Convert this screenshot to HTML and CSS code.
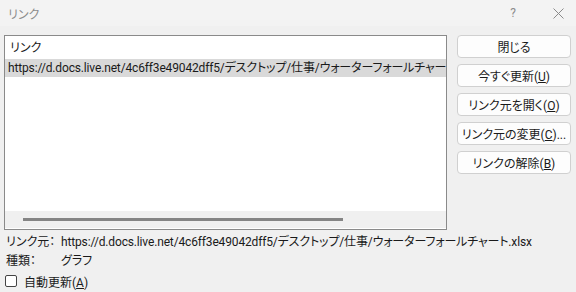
FILE: index.html
```
<!DOCTYPE html>
<html lang="ja">
<head>
<meta charset="utf-8">
<title>リンク</title>
<link rel="stylesheet" href="styles.css">
</head>
<body>
<div class="dialog">
  <div class="titlebar">
    <span class="title">リンク</span>
    <span class="help">?</span>
    <span class="close">
      <svg width="11" height="11" viewBox="0 0 11 11"><path d="M0.5 0.5 L10.5 10.5 M10.5 0.5 L0.5 10.5" stroke="#8a8a8a" stroke-width="1" fill="none"/></svg>
    </span>
  </div>
  <div class="main">
    <div class="listbox">
      <div class="list-content">
        <div class="list-header">リンク</div>
        <div class="list-row selected">https://d.docs.live.net/4c6ff3e49042dff5/デスクトップ/仕事/ウォーターフォールチャート.xlsx</div>
      </div>
      <div class="hscroll"><div class="thumb"></div></div>
    </div>
    <div class="buttons">
      <button class="btn">閉じる</button>
      <button class="btn">今すぐ更新(<u>U</u>)</button>
      <button class="btn">リンク元を開く(<u>O</u>)</button>
      <button class="btn">リンク元の変更(<u>C</u>)...</button>
      <button class="btn">リンクの解除(<u>B</u>)</button>
    </div>
  </div>
  <div class="info">
    <div class="info-row"><span class="label">リンク元：</span><span class="value url">https://d.docs.live.net/4c6ff3e49042dff5/デスクトップ/仕事/ウォーターフォールチャート.xlsx</span></div>
    <div class="info-row"><span class="label">種類：</span><span class="value">グラフ</span></div>
    <label class="check-row"><span class="checkbox"></span><span>自動更新(<u>A</u>)</span></label>
  </div>
</div>
</body>
</html>
```
FILE: styles.css
```
* { box-sizing: border-box; }
html, body {
  margin: 0;
  padding: 0;
  background: #f0f0f0;
  font-family: Roboto, "Noto Sans CJK JP", sans-serif;
  font-size: 12px;
  font-feature-settings: "palt";
  color: #1a1a1a;
}
.dialog {
  width: 576px;
  height: 292px;
  overflow: hidden;
}
.titlebar {
  height: 26px;
  background: #f3f3f3;
  display: flex;
  align-items: center;
  padding-left: 8px;
}
.title {
  color: #8c8c8c;
  flex: 1;
}
.help {
  color: #8c8c8c;
  width: 20px;
  text-align: center;
  margin-right: 20px;
}
.close {
  width: 30px;
  display: flex;
  justify-content: center;
  margin-right: 3px;
}
.main {
  display: flex;
  padding: 9px 5px 0 4px;
}
.listbox {
  width: 443px;
  height: 195px;
  border: 1px solid #8a8a8a;
  background: #fff;
  display: flex;
  flex-direction: column;
}
.list-content {
  flex: 1;
  overflow: hidden;
  padding-top: 2px;
}
.list-header {
  height: 21px;
  line-height: 21px;
  padding-left: 5px;
}
.list-row {
  height: 18px;
  line-height: 18px;
  white-space: nowrap;
  overflow: hidden;
  padding-left: 3px;
  letter-spacing: -0.15px;
}
.list-row.selected {
  background: #d9d9d9;
}
.hscroll {
  height: 17px;
  background: #f0f0f0;
  position: relative;
  margin-bottom: 1px;
}
.thumb {
  position: absolute;
  left: 18px;
  width: 320px;
  top: 7px;
  height: 3px;
  background: #858585;
}
.buttons {
  margin-left: 10px;
  width: 114px;
  display: flex;
  flex-direction: column;
  gap: 6px;
}
.btn {
  height: 23px;
  border: 1px solid #d0d0d0;
  border-radius: 4px;
  background: #fdfdfd;
  font-family: inherit;
  font-size: 12px;
  font-feature-settings: "palt";
  color: #1a1a1a;
  padding: 0;
  text-align: center;
  white-space: nowrap;
}
.info {
  padding: 3px 0 0 6px;
}
.info-row {
  display: flex;
  height: 19px;
  line-height: 19px;
  white-space: nowrap;
}
.label {
  width: 55px;
}
.url {
  letter-spacing: -0.15px;
}
.check-row {
  display: flex;
  align-items: center;
  height: 20px;
  margin-left: -1px;
}
.checkbox {
  width: 12px;
  height: 12px;
  border: 1px solid #444;
  border-radius: 2px;
  background: #fff;
  margin-right: 7px;
}
```
